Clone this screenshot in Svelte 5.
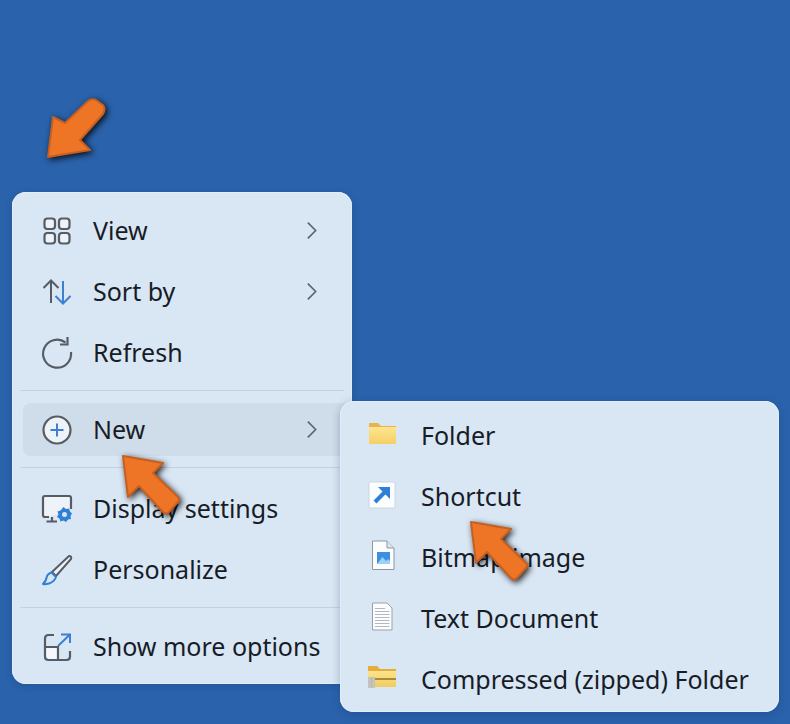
<script>
	const subItems = ['Folder', 'Shortcut', 'Bitmap image', 'Text Document', 'Compressed (zipped) Folder'];
</script>

{#snippet chevron()}
	<svg class="chevron" viewBox="0 0 12 20" aria-hidden="true"><path d="M2 1.5 10.5 10 2 18.5" /></svg>
{/snippet}

{#snippet pointer(cls)}
	<svg class="pointer {cls}" viewBox="0 0 70 66" aria-hidden="true">
		<path d="M3 3 43 10 33 20 58 44Q60 47 58 49L49 59Q46 62 43 59L19 33 8 44Z" />
	</svg>
{/snippet}

<div class="desktop">
	<svg class="pointer first" viewBox="0 0 75 75" aria-hidden="true">
		<path d="M8 67 13 27 25 33 48 11Q52 8 56 10L63 15Q66 19 63 24L40 50 50 60Z" />
	</svg>

	<div class="menu">
		<div class="row">
			<svg class="icon" viewBox="0 0 30 30" aria-hidden="true">
				<g class="line plate">
					<rect x="2.5" y="2.5" width="10.5" height="10.5" rx="3" />
					<rect x="17" y="2.5" width="10.5" height="10.5" rx="3" />
					<rect x="2.5" y="17" width="10.5" height="10.5" rx="3" />
					<rect x="17" y="17" width="10.5" height="10.5" rx="3" />
				</g>
			</svg>
			<span>View</span>
			{@render chevron()}
		</div>
		<div class="row">
			<svg class="icon" viewBox="0 0 30 30" aria-hidden="true">
				<path class="thin" d="M9 26V4M1.5 11 9 3.5 16.5 11" />
				<path class="thin blue" d="M21 4V26M13.5 19 21 26.5 28.5 19" />
			</svg>
			<span>Sort by</span>
			{@render chevron()}
		</div>
		<div class="row">
			<svg class="icon" viewBox="0 0 30 30" aria-hidden="true">
				<path class="line" d="M23.5 4.5A14 14 0 1 0 29 14" />
				<path class="line" d="M25.5 -1V6.5H18" />
			</svg>
			<span>Refresh</span>
		</div>

		<div class="divider"></div>

		<div class="row active">
			<svg class="icon" viewBox="0 0 30 30" aria-hidden="true">
				<circle class="line plate" cx="15" cy="15" r="13.5" />
				<path class="thin blue" d="M15 8.5V21.5M8.5 15H21.5" />
			</svg>
			<span>New</span>
			{@render chevron()}

			<div class="submenu">
				{#each subItems as label, i}
					<div class="row sub">
						<svg class="icon" viewBox="0 0 30 30" aria-hidden="true">
							{#if i === 0}
								<path fill="#e9b44c" d="M2 2H11L14 5H29V9H2Z" />
								<rect x="2" y="6" width="27" height="17" fill="url(#folder)" />
							{:else if i === 1}
								<rect x="2" y="0" width="26" height="26" rx="1" fill="#fbfdff" stroke="#ccd6e2" />
								<path fill="none" stroke="#2f7fd6" stroke-width="4" d="M8 20 20 8" />
								<path fill="#2f7fd6" d="M11 5H23V17Z" />
							{:else if i === 2}
								<g transform="translate(0 -3)">
									<path fill="#fbfdff" stroke="#8f97a3" d="M5.5 1H20L27 8V29.5H5.5Z" />
									<path fill="#dde5ee" stroke="#8f97a3" d="M20 1V8H27" />
									<rect x="10" y="12" width="13" height="12" fill="#3f8fe0" />
									<path fill="#9cd2f5" d="M10 24 15.5 17 19 21 21 19 23 21V24Z" />
								</g>
							{:else if i === 3}
								<g transform="translate(0 -2.500)">
									<path fill="#fbfdff" stroke="#9aa1ab" d="M5.5 1.5H20L25 6.5V28.5H5.5Z" />
									<path class="rule" d="M8 7H18M8 10H22.5M8 13H22.5M8 16H22.5M8 19H22.5M8 22H22.5M8 25H22.5" />
								</g>
							{:else}
								<path fill="#e3ae3d" d="M1 1H10L13 4H29V8H1Z" />
								<rect x="1" y="6" width="28" height="16" fill="url(#zip)" />
								<rect x="1" y="13" width="28" height="2" fill="#a78c3a" />
								<rect x="1" y="12" width="7" height="11" fill="#c4c4bb" />
								<path class="rule" d="M4.500 12V22" />
							{/if}
						</svg>
						<span>{label}</span>
					</div>
				{/each}
			</div>
		</div>

		<div class="divider lifted"></div>

		<div class="row">
			<svg class="icon" viewBox="0 0 30 30" aria-hidden="true">
				<path class="line plate" d="M7 23H3Q1 23 1 21V4Q1 2 3 2H27Q29 2 29 4V15" />
				<path class="line" d="M10 23V27M4.500 27.500H15" />
				<path fill="#2f7fd6" d="M21.500 13 24 15 27 14.500 28 17.500 30 19.500 28.500 22 29 25 26 25.500 24 28 21.500 26.500 18.500 27.500 17.500 24.500 15 23 16.500 20.500 15.500 17.500 18.500 16.500Z" />
				<circle cx="22.500" cy="20.500" r="2.500" fill="#d8e5f3" />
			</svg>
			<span>Display settings</span>
		</div>
		<div class="row">
			<svg class="icon" viewBox="0 0 30 30" aria-hidden="true">
				<path class="thin plate" d="M27 1Q30 1 29 4L14 21 10 17Z" />
				<path fill="#d8e5f3" stroke="#2f7fd6" stroke-width="2" stroke-linejoin="round" d="M9.500 17.500 14 22Q12 27 7 28.500 3 29.500 1 29 4 26 4.500 23 5 19 9.500 17.500Z" />
			</svg>
			<span>Personalize</span>
		</div>

		<div class="divider"></div>

		<div class="row">
			<svg class="icon" viewBox="0 0 30 30" aria-hidden="true">
				<rect x="4" y="15" width="12" height="13" fill="#f4f7fb" />
				<path class="line" d="M12 3H6.500Q3 3 3 6.500V24.500Q3 28 6.500 28H24.500Q28 28 28 24.500V19M3 15H16V28" />
				<path class="thin blue" d="M16 14 28 2.500M19 2.500H28V11" />
			</svg>
			<span>Show more options</span>
		</div>
	</div>

	{@render pointer('second')}
	{@render pointer('third')}
</div>

<svg class="defs" width="0" height="0" aria-hidden="true">
	<defs>
		<linearGradient id="folder" x1="0" y1="0" x2="0" y2="1">
			<stop offset="0" stop-color="#ffe58f" />
			<stop offset="1" stop-color="#f5cf66" />
		</linearGradient>
		<linearGradient id="zip" x1="0" y1="0" x2="0" y2="1">
			<stop offset="0" stop-color="#ffe48c" />
			<stop offset="1" stop-color="#f1cb62" />
		</linearGradient>
	</defs>
</svg>

<style>
	:global(body) {
		margin: 0;
		background: #2a62ab;
	}

	.desktop {
		position: relative;
		box-sizing: border-box;
		height: 724px;
		padding: 192px 0 0 12px;
		overflow: hidden;
		background: #2a62ab;
		font-family: "Noto Sans", "Open Sans", sans-serif;
		font-size: 25px;
		color: #171c27;
	}

	.menu {
		box-sizing: border-box;
		width: 340px;
		height: 492px;
		padding: 8px 0 0;
		border-radius: 14px;
		background: #d9e6f4;
		box-shadow: 0 0 0 1px #e3edf8 inset, 0 2px 6px rgba(20, 50, 100, 0.25);
	}

	.row {
		position: relative;
		display: flex;
		align-items: center;
		height: 61px;
		padding-left: 30px;
		gap: 21px;
		white-space: nowrap;
	}

	.row span {
		margin-top: -1px;
	}

	.row.active::before {
		content: "";
		position: absolute;
		left: 11px;
		right: 0;
		top: 4px;
		bottom: 4px;
		border-radius: 8px;
		background: #cfdce9;
	}

	.row > * {
		position: relative;
	}

	.icon {
		flex: none;
		width: 30px;
		height: 30px;
		overflow: visible;
	}

	.chevron {
		position: absolute;
		left: 294px;
		top: 21px;
		width: 11px;
		height: 19px;
		fill: none;
		stroke: #5b6570;
		stroke-width: 1.8;
	}

	.line {
		fill: none;
		stroke: #555c64;
		stroke-width: 2.2;
	}

	.thin {
		fill: none;
		stroke: #555c64;
		stroke-width: 2;
	}

	.blue {
		stroke: #3d7fd0;
	}

	.plate {
		fill: #eef3f9;
	}

	.rule {
		fill: none;
		stroke: #b4b9c0;
		stroke-width: 1;
	}

	.divider {
		height: 1px;
		margin: 7px 8px 8px 8px;
		background: #c4d1df;
	}

	.divider.lifted {
		margin: 7px 8px 10px 8px;
	}

	.submenu {
		position: absolute;
		left: 328px;
		top: 1.5px;
		box-sizing: border-box;
		width: 439px;
		height: 311px;
		padding-top: 4.5px;
		border-radius: 14px;
		background: #d9e6f4;
		box-shadow: 0 0 0 1px #e3edf8 inset, 0 2px 8px rgba(20, 50, 100, 0.3);
		z-index: 1;
	}

	.row.sub {
		padding-left: 27px;
		gap: 24px;
	}

	.pointer {
		position: absolute;
		fill: #ee7426;
		stroke: #c75f20;
		stroke-width: 2;
		stroke-linejoin: round;
		filter: drop-shadow(2px 2px 3px rgba(0, 0, 0, 0.85));
		z-index: 2;
	}

	.first {
		left: 40px;
		top: 90px;
		width: 75px;
		height: 75px;
	}

	.second {
		left: 120px;
		top: 453px;
		width: 70px;
		height: 66px;
	}

	.third {
		left: 468px;
		top: 519px;
		width: 70px;
		height: 66px;
	}

	.defs {
		position: absolute;
	}
</style>
